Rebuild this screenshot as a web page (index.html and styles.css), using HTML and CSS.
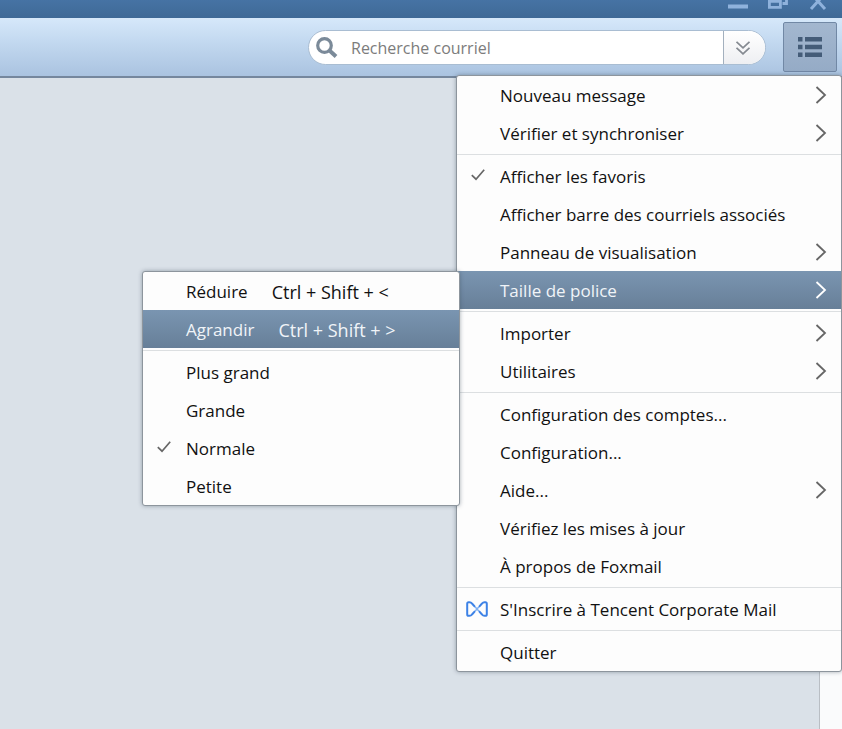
FILE: index.html
```html
<!DOCTYPE html>
<html lang="fr">
<head>
<meta charset="utf-8">
<title>Foxmail</title>
<link rel="stylesheet" href="styles.css">
</head>
<body>
<svg class="sprite" aria-hidden="true">
  <symbol id="chevron" viewBox="0 0 12 18"><path d="M1.5 1l8.500 8-8.500 8" fill="none" stroke="currentColor" stroke-width="1.800"/></symbol>
  <symbol id="check" viewBox="0 0 14 12"><path d="M.8 6.200l4.200 4L13.200.8" fill="none" stroke="currentColor" stroke-width="1.700"/></symbol>
</svg>
<div class="window">
  <header class="titlebar">
    <button class="caption" aria-label="Réduire la fenêtre"><svg width="20" height="14" viewBox="0 0 20 14"><path d="M0 6.500h20" stroke="currentColor" stroke-width="4"/></svg></button>
    <button class="caption" aria-label="Restaurer"><svg width="20" height="14" viewBox="0 0 20 14"><g fill="none" stroke="currentColor" stroke-width="2.800"><path d="M1.400 1.400h11v6h-11z"/><path d="M7-2h11.500v5.500h-4"/></g></svg></button>
    <button class="caption" aria-label="Fermer"><svg width="20" height="14" viewBox="0 0 20 14"><path d="M3-6.500L17 9M17-6.500L3 9" stroke="currentColor" stroke-width="3"/></svg></button>
  </header>
  <div class="toolbar">
    <form class="search">
      <svg class="search-icon" width="22" height="22" viewBox="0 0 22 22" aria-hidden="true"><g fill="none" stroke="currentColor"><circle cx="8.500" cy="8.500" r="6.800" stroke-width="3.200"/><path d="M13.500 13.500l6.500 6" stroke-width="4"/></g></svg>
      <input type="search" class="search-input" placeholder="Recherche courriel" aria-label="Recherche courriel">
      <button type="button" class="search-more" aria-label="Options de recherche"><svg width="14" height="14" viewBox="0 0 14 14"><path d="M.5.8L7 6.800 13.500.8M.5 6.800L7 12.800l6.500-6" fill="none" stroke="currentColor" stroke-width="1.800"/></svg></button>
    </form>
    <div class="menu-anchor">
      <button class="menu-button" aria-label="Menu principal" aria-expanded="true"><svg width="24" height="20" viewBox="0 0 24 20"><path d="M0 0h4.500v4.500H0zM7 0h17v4.500H7zM0 7.700h4.500v4.500H0zM7 7.700h17v4.500H7zM0 15.500h4.500V20H0zM7 15.500h17V20H7z" fill="currentColor"/></svg></button>
      <ul class="menu main-menu">
        <li><button class="item">Nouveau message<svg class="chevron"><use href="#chevron"/></svg></button></li>
        <li><button class="item">Vérifier et synchroniser<svg class="chevron"><use href="#chevron"/></svg></button></li>
        <li class="separator"></li>
        <li><button class="item"><svg class="check"><use href="#check"/></svg>Afficher les favoris</button></li>
        <li><button class="item">Afficher barre des courriels associés</button></li>
        <li><button class="item">Panneau de visualisation<svg class="chevron"><use href="#chevron"/></svg></button></li>
        <li class="has-submenu"><button class="item active" aria-expanded="true">Taille de police<svg class="chevron"><use href="#chevron"/></svg></button>
          <ul class="menu submenu">
            <li><button class="item">Réduire<kbd>Ctrl + Shift + &lt;</kbd></button></li>
            <li><button class="item active">Agrandir<kbd>Ctrl + Shift + &gt;</kbd></button></li>
            <li class="separator"></li>
            <li><button class="item">Plus grand</button></li>
            <li><button class="item">Grande</button></li>
            <li><button class="item"><svg class="check"><use href="#check"/></svg>Normale</button></li>
            <li><button class="item">Petite</button></li>
          </ul>
        </li>
        <li class="separator"></li>
        <li><button class="item">Importer<svg class="chevron"><use href="#chevron"/></svg></button></li>
        <li><button class="item">Utilitaires<svg class="chevron"><use href="#chevron"/></svg></button></li>
        <li class="separator"></li>
        <li><button class="item">Configuration des comptes...</button></li>
        <li><button class="item">Configuration...</button></li>
        <li><button class="item">Aide...<svg class="chevron"><use href="#chevron"/></svg></button></li>
        <li><button class="item">Vérifiez les mises à jour</button></li>
        <li><button class="item">À propos de Foxmail</button></li>
        <li class="separator"></li>
        <li><button class="item"><svg class="brand" viewBox="0 0 22 16"><g fill="none" stroke="#3d82e6" stroke-width="2" stroke-linejoin="round"><path d="M9 10.200L6 13.500Q5 14.800 3.500 14.800H2.600Q1.200 14.800 1.200 13.200V2.800Q1.200 1.200 2.600 1.200H3.500Q5 1.200 6 2.500L9 5.800"/><path d="M13 10.200L16 13.500Q17 14.800 18.500 14.800H19.400Q20.800 14.800 20.800 13.200V2.800Q20.800 1.200 19.400 1.200H18.500Q17 1.200 16 2.500L13 5.800"/><path d="M9 5.800l4 4.400M13 5.800l-4 4.400" stroke="#7fb0f2" stroke-width="1.500"/></g></svg>S'Inscrire à Tencent Corporate Mail</button></li>
        <li class="separator"></li>
        <li><button class="item">Quitter</button></li>
      </ul>
    </div>
  </div>
  <main class="content">
    <section class="pane"></section>
    <aside class="gutter"></aside>
  </main>
</div>
</body>
</html>
```
FILE: styles.css
```css
* { box-sizing: border-box; }

body {
  margin: 0;
  font: 17px/24px "Open Sans", "Noto Sans", sans-serif;
  color: #111;
}

button, input { font: inherit; color: inherit; }

button { border: 0; padding: 0; background: none; }

.sprite { position: absolute; width: 0; height: 0; }

.window {
  display: flex;
  flex-direction: column;
  height: 100vh;
  overflow: hidden;
}

.titlebar {
  display: flex;
  justify-content: flex-end;
  gap: 20px;
  height: 18px;
  padding-right: 14px;
  background: linear-gradient(#4673a4, #3f6996);
  color: #8fb2dc;
}

.caption { width: 20px; height: 14px; }
.caption svg { display: block; }

.toolbar {
  display: flex;
  justify-content: flex-end;
  gap: 17px;
  height: 60px;
  padding: 4px 5px 5px 0;
  background: linear-gradient(#d6e8fa, #c3d9f0 40%, #aac3e0);
  border-bottom: 2px solid #75879d;
}

.search {
  display: flex;
  align-items: center;
  width: 458px;
  height: 35px;
  margin-top: 8px;
  border: 1px solid #a9bdd2;
  border-radius: 18px;
  background: #fff;
  overflow: hidden;
}

.search-icon { flex: none; margin-left: 7px; color: #7b8a99; }

.search-input {
  flex: 1;
  min-width: 0;
  padding: 0 13px;
  border: 0;
  outline: 0;
  background: none;
  font-size: 16px;
}

.search-input::placeholder { color: #7c7c7c; opacity: 1; }

.search-more {
  display: grid;
  place-items: center;
  width: 42px;
  height: 100%;
  padding-right: 4px;
  border-left: 1px solid #a3b0be;
  background: linear-gradient(#fff, #eeeff2);
  color: #858a91;
}

.menu-anchor { position: relative; }

.menu-button {
  display: grid;
  place-items: center;
  width: 54px;
  height: 50px;
  border: 1px solid #7188a5;
  border-radius: 2px;
  background: linear-gradient(#a3b7cf, #95abc6);
  color: #445c78;
}

.menu {
  position: absolute;
  margin: 0;
  padding: 0;
  list-style: none;
  background: #fdfdfd;
  border: 1px solid #8d959d;
  border-radius: 3px;
  box-shadow: 0 0 4px rgba(60, 75, 90, .45);
}

.main-menu { top: 53px; right: -5px; width: 386px; }

.submenu { top: 0; right: calc(100% - 3px); width: 318px; }

.has-submenu { position: relative; }

.item {
  position: relative;
  display: flex;
  align-items: center;
  width: 100%;
  height: 38px;
  padding: 1px 43px 0;
  text-align: left;
  white-space: nowrap;
}

.item.active {
  background: linear-gradient(#7a95b1, #677f98);
  color: #f0f4f8;
}

.item kbd { margin-left: 24px; font-family: inherit; font-size: 18px; }

.separator { height: 5px; padding-top: 2px; }
.separator::before { content: ""; display: block; height: 1px; background: #dcdfe1; }

.chevron {
  position: absolute;
  top: 10px;
  right: 14px;
  width: 12px;
  height: 18px;
  color: #666;
}

.active .chevron { color: #fff; }

.check {
  position: absolute;
  top: 12px;
  left: 14px;
  width: 14px;
  height: 12px;
  color: #666;
}

.brand {
  position: absolute;
  top: 11px;
  left: 9px;
  width: 22px;
  height: 16px;
}

.content { display: flex; flex: 1; }

.pane { flex: 1; background: #dae1e8; border-right: 1px solid #b9bec4; }

.gutter { width: 22px; background: #fafbfc; }
```
